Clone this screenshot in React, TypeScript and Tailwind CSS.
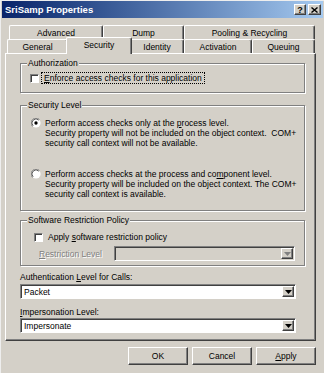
import React from "react";

const FACE = "bg-[#d4d0c8]";
const RAISED =
  "border border-t-white border-l-white border-r-[#404040] border-b-[#404040] shadow-[inset_-1px_-1px_0_#808080]";
const SUNKEN =
  "border border-t-[#808080] border-l-[#808080] border-r-white border-b-white shadow-[inset_1px_1px_0_#404040]";

const ROW_BACK = [
  { label: "Advanced", w: "w-[94px]" },
  { label: "Dump", w: "w-[81px]" },
  { label: "Pooling & Recycling", w: "w-[131px]" },
];

const ROW_FRONT = [
  { label: "General", w: "w-[61px]" },
  { label: "Security", w: "w-[66px]", active: true },
  { label: "Identity", w: "w-[54px]" },
  { label: "Activation", w: "w-[68px]" },
  { label: "Queuing", w: "w-[63px]" },
];

function Tab({ label, w, active }: { label: string; w: string; active?: boolean }) {
  if (active) {
    return (
      <div
        className={`${w} relative z-10 -mx-[2px] mb-[-1px] flex h-[17px] items-start justify-center rounded-t-[2px] border-l border-t border-r border-l-white border-t-white border-r-[#404040] pt-[2px] shadow-[inset_-1px_0_0_#808080] ${FACE}`}
      >
        {label}
      </div>
    );
  }
  return (
    <div
      className={`${w} flex h-[14px] items-center justify-center rounded-t-[2px] border-l border-t border-r border-l-white border-t-white border-r-[#404040] shadow-[inset_-1px_0_0_#808080]`}
    >
      {label}
    </div>
  );
}

function Checkbox() {
  return <div className={`h-[9px] w-[9px] shrink-0 bg-white ${SUNKEN}`} />;
}

function Radio({ checked }: { checked?: boolean }) {
  return (
    <svg width="10" height="10" viewBox="0 0 12 12" className="shrink-0">
      <circle cx="6" cy="6" r="5.5" fill="#fff" />
      <path d="M1.8 10.2 A5.5 5.5 0 0 1 10.2 1.8" stroke="#808080" strokeWidth="1" fill="none" />
      <path d="M2.6 9.4 A4.5 4.5 0 0 1 9.4 2.6" stroke="#404040" strokeWidth="1" fill="none" />
      {checked && <circle cx="6" cy="6" r="2" fill="#000" />}
    </svg>
  );
}

function DropArrow({ disabled }: { disabled?: boolean }) {
  return (
    <div className={`flex h-full w-[12px] shrink-0 items-center justify-center ${FACE} ${RAISED}`}>
      <svg width="7" height="4" viewBox="0 0 7 4">
        <path d="M0 0 H7 L3.5 4 Z" fill={disabled ? "#808080" : "#000"} />
      </svg>
    </div>
  );
}

function Combo({ value, w, disabled }: { value?: string; w: string; disabled?: boolean }) {
  return (
    <div className={`${w} flex h-[15px] items-stretch p-[1px] ${SUNKEN} ${disabled ? FACE : "bg-white"}`}>
      <div className="flex flex-1 items-center pl-[2px]">{value}</div>
      <DropArrow disabled={disabled} />
    </div>
  );
}

function Group({ title, h, children }: { title: string; h: string; children: React.ReactNode }) {
  return (
    <div
      className={`relative ml-[14px] w-[285px] ${h} border border-[#808080] shadow-[inset_1px_1px_0_#fff,1px_1px_0_#fff]`}
    >
      <span className={`absolute -top-[6px] left-[6px] px-[1px] leading-[10px] ${FACE}`}>{title}</span>
      {children}
    </div>
  );
}

function Button({ children }: { children: React.ReactNode }) {
  return (
    <div className={`flex h-[18px] w-[60px] items-center justify-center ${RAISED}`}>{children}</div>
  );
}

export default function App() {
  return (
    <div
      className={`h-[373px] w-[324px] overflow-hidden border-l border-t border-l-[#eeeeee] border-t-[#eeeeee] ${FACE} font-['Liberation_Sans',Arial,sans-serif] text-[8.5px] leading-[10px] text-black`}
    >
      {/* title bar */}
      <div className="mx-[1px] flex h-[17px] items-center bg-gradient-to-r from-[#0a246a] to-[#a6caf0] pl-[3px] pr-[2px]">
        <span className="flex-1 text-[9.5px] font-bold text-white">SriSamp Properties</span>
        <div className={`mr-[2px] flex h-[11px] w-[12px] items-center justify-center text-[9px] font-bold ${FACE} ${RAISED}`}>
          ?
        </div>
        <div className={`flex h-[11px] w-[13px] items-center justify-center ${FACE} ${RAISED}`}>
          <svg width="7" height="6" viewBox="0 0 7 6">
            <path d="M0.5 0.5 L6.5 5.5 M6.5 0.5 L0.5 5.5" stroke="#000" strokeWidth="1.4" />
          </svg>
        </div>
      </div>

      {/* tabs */}
      <div className="ml-[8px] mt-[7px] flex">
        {ROW_BACK.map((t) => (
          <Tab key={t.label} {...t} />
        ))}
      </div>
      <div className="ml-[6px] flex h-[14px] items-end">
        {ROW_FRONT.map((t) => (
          <Tab key={t.label} {...t} />
        ))}
      </div>

      {/* page */}
      <div
        className={`relative ml-[4px] flex h-[288px] w-[311px] flex-col border border-t-white border-l-white border-r-[#404040] border-b-[#404040] shadow-[inset_-1px_-1px_0_#808080]`}
      >
        <div className="mt-[9px]">
          <Group title="Authorization" h="h-[30px]">
            <div className="flex h-full items-center pl-[9px]">
              <Checkbox />
              <span className="ml-[2px] border border-dotted border-black px-[2px] leading-[10px]">
                <u>E</u>nforce access checks for this application
              </span>
            </div>
          </Group>
        </div>

        <div className="mt-[12px]">
          <Group title="Security Level" h="h-[106px]">
            <div className="flex flex-col gap-[21px] pl-[10px] pt-[12px]">
              <div className="flex items-start gap-[4px]">
                <Radio checked />
                <p>
                  Perform access checks only at the <u>p</u>rocess level.
                  <br />
                  Security property will not be included on the object context.&nbsp; COM+
                  <br />
                  security call context will not be available.
                </p>
              </div>
              <div className="flex items-start gap-[4px]">
                <Radio />
                <p>
                  Perform access checks at the process and co<u>m</u>ponent level.
                  <br />
                  Security property will be included on the object context. The COM+
                  <br />
                  security call context is available.
                </p>
              </div>
            </div>
          </Group>
        </div>

        <div className="mt-[9px]">
          <Group title="Software Restriction Policy" h="h-[46px]">
            <div className="flex items-center pl-[13px] pt-[11px]">
              <Checkbox />
              <span className="ml-[5px]">
                Apply <u>s</u>oftware restriction policy
              </span>
            </div>
            <div className="mt-[4px] flex items-center pl-[18px]">
              <span className="w-[75px] text-[#808080] [text-shadow:1px_1px_0_#fff]">
                <u>R</u>estriction Level
              </span>
              <Combo w="w-[181px]" disabled />
            </div>
          </Group>
        </div>

        <div className="ml-[14px] mt-[6px]">
          Authentication <u>L</u>evel for Calls:
        </div>
        <div className="ml-[14px] mt-[2px]">
          <Combo value="Packet" w="w-[276px]" />
        </div>
        <div className="ml-[14px] mt-[8px]">
          <u>I</u>mpersonation Level:
        </div>
        <div className="ml-[14px] mt-[1px]">
          <Combo value="Impersonate" w="w-[276px]" />
        </div>
      </div>

      {/* buttons */}
      <div className="ml-[127px] mt-[6px] flex gap-[4px]">
        <Button>OK</Button>
        <Button>Cancel</Button>
        <Button>
          <span>
            <u>A</u>pply
          </span>
        </Button>
      </div>
    </div>
  );
}
